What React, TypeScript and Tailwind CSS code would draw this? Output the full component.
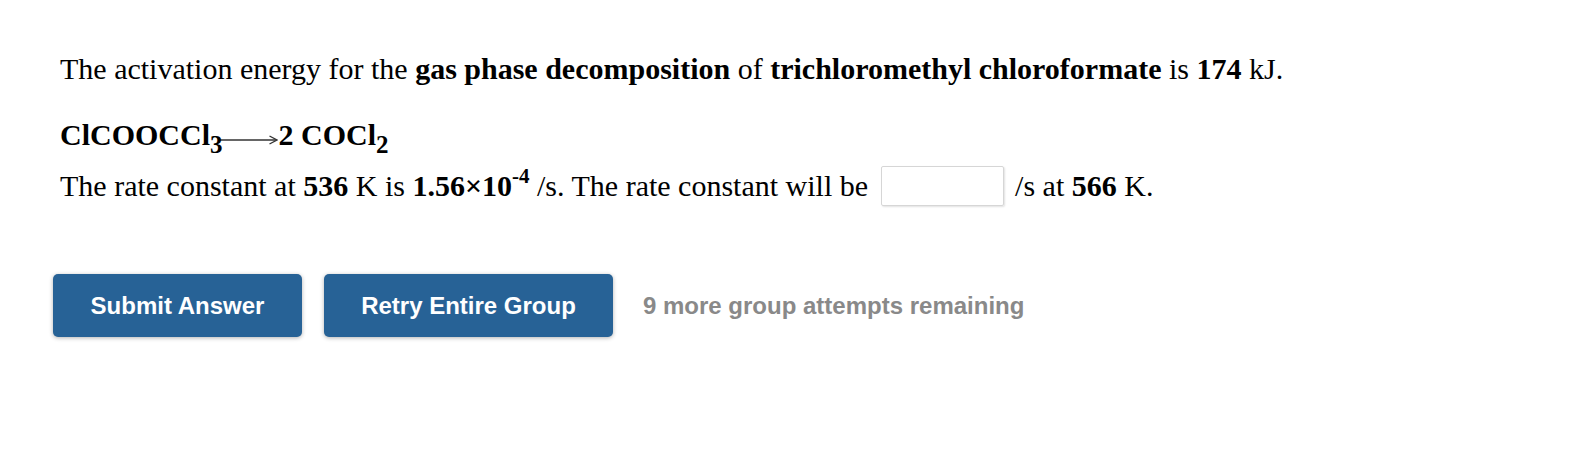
function Arrow() {
  return (
    <svg width="60" height="12" viewBox="0 0 60 12" className="inline-block -ml-[5px] mr-[1px] align-[-1px]">
      <line x1="0" y1="6" x2="58" y2="6" stroke="#333" strokeWidth="1.4" />
      <path d="M51.5 2 L59 6 L51.5 10" fill="none" stroke="#333" strokeWidth="1.4" />
    </svg>
  );
}

export default function App() {
  return (
    <div className="w-[1586px] h-[458px] bg-white pl-[60px] pt-[51px]" style={{ fontFamily: '"Liberation Serif", serif' }}>
      <p className="text-[30px] leading-[36px] text-black">
        The activation energy for the <b>gas phase decomposition</b> of <b>trichloromethyl chloroformate</b> is <b>174</b> kJ.
      </p>
      <p className="mt-[30px] text-[30px] leading-[36px] font-bold text-black">
        ClCOOCCl<sub className="text-[25px] leading-none bottom-[-8px]">3</sub>
        <Arrow />2 COCl<sub className="text-[25px] leading-none bottom-[-8px]">2</sub>
      </p>
      <div className="mt-[13px] text-[30px] leading-[36px] text-black flex items-center">
        <span>
          The rate constant at <b>536</b> K is <b>1.56×10<sup className="text-[21px] leading-none top-[-13px]">-4</sup></b> /s. The rate constant will be
        </span>
        <input
          type="text"
          className="ml-[13px] mr-[11px] w-[123px] h-[40px] border border-[#d6d6d6] rounded-[2px] shadow-[1px_1px_2px_rgba(0,0,0,0.12)] outline-none"
        />
        <span>
          /s at <b>566</b> K.
        </span>
      </div>
      <div className="mt-[68px] flex items-center -ml-[7px]" style={{ fontFamily: '"Liberation Sans", Arial, sans-serif' }}>
        <button className="w-[249px] h-[63px] rounded-[5px] bg-[#276296] text-white text-[24px] font-bold shadow-[0_1px_4px_rgba(0,0,0,0.3)]">
          Submit Answer
        </button>
        <button className="ml-[22px] w-[289px] h-[63px] rounded-[5px] bg-[#276296] text-white text-[24px] font-bold shadow-[0_1px_4px_rgba(0,0,0,0.3)]">
          Retry Entire Group
        </button>
        <span className="ml-[30px] text-[24px] font-bold text-[#898989]">9 more group attempts remaining</span>
      </div>
    </div>
  );
}
